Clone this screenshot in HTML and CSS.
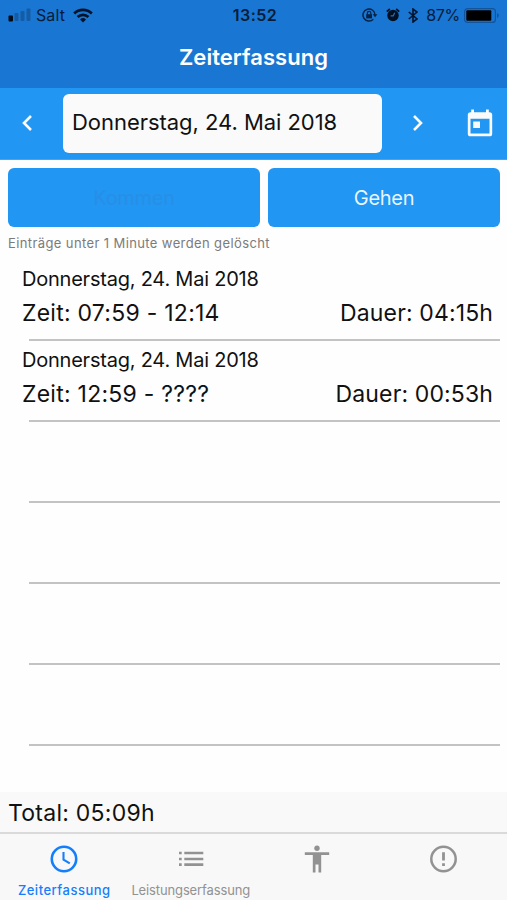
FILE: index.html
```html
<!DOCTYPE html>
<html lang="de">
<head>
    <meta charset="UTF-8">
    <meta name="viewport" content="width=device-width, initial-scale=1.0">
    <title>Zeiterfassung</title>
    <link rel="stylesheet" href="styles.css">
</head>
<body>
    <header>
        <div class="status-bar">
            <div class="status-left">
                <svg class="signal" width="24" height="14" viewBox="0 0 24 14">
                    <rect x="0.5" y="7.500" width="4.500" height="6" rx="1" fill="#020b18"/>
                    <rect x="6.500" y="5" width="4" height="8" rx="1" fill="#165ca5"/>
                    <rect x="12.500" y="3" width="4" height="10" rx="1" fill="#165ca5"/>
                    <rect x="18.500" y="0.500" width="4" height="12.500" rx="1" fill="#165ca5"/>
                </svg>
                <span class="carrier">Salt</span>
                <svg class="wifi" width="20" height="15" viewBox="0 0 20 15" fill="none" stroke="#03142a" stroke-width="2.7">
                    <path d="M1.2 5.5a12.5 12.5 0 0 1 17.6 0"/>
                    <path d="M4.6 9a7.7 7.7 0 0 1 10.8 0"/>
                    <path d="M10 14.5L7 11.4a4.3 4.3 0 0 1 6 0z" fill="#03142a" stroke="none"/>
                </svg>
            </div>
            <div class="clock">13:52</div>
            <div class="status-right">
                <svg class="lock" width="16" height="14" viewBox="0 0 16 14" fill="none" stroke="#062347" stroke-width="1.5">
                    <path d="M11.3 11.2A6 6 0 1 1 13 7"/>
                    <path d="M10.6 6.2h4.8L13.1 9.200z" fill="#062347" stroke="none"/>
                    <rect x="4.2" y="6.2" width="5.8" height="4.2" fill="#062347" stroke="none"/>
                    <path d="M5.4 6.5V5a1.7 1.7 0 0 1 3.4 0v1.5" stroke-width="1.2"/>
                </svg>
                <svg class="alarm" width="14" height="14" viewBox="0 0 14 14">
                    <circle cx="7" cy="7.5" r="5.7" fill="#020f20"/>
                    <path d="M0.8 3.6L3.8 1M13.2 3.6L10.2 1" stroke="#020f20" stroke-width="1.7"/>
                    <path d="M8.7 4.7L7.2 7.9H4.6" fill="none" stroke="#1976d2" stroke-width="1.2"/>
                </svg>
                <svg class="bluetooth" width="10" height="15" viewBox="0 0 10 15" fill="none" stroke="#03162e" stroke-width="1.6">
                    <path d="M0.8 4L9 11 5 14V1l4 3-8.2 7"/>
                </svg>
                <span class="percent">87%</span>
                <svg class="battery" width="36" height="15" viewBox="0 0 36 15">
                    <rect x="0.6" y="0.6" width="30.8" height="13.8" rx="3" fill="none" stroke="#13559b" stroke-width="1.2"/>
                    <rect x="2.3" y="2.3" width="25" height="10.4" rx="1" fill="#000"/>
                    <path d="M33 5v5q1.8-.6 1.8-2.5T33 5z" fill="#13559b"/>
                </svg>
            </div>
        </div>
        <h1>Zeiterfassung</h1>
    </header>

    <div class="toolbar">
        <svg class="prev" width="12" height="18" viewBox="0 0 12 18"><path d="M10 2L3 9l7 7"/></svg>
        <div class="date-field"><span>Donnerstag, 24. Mai 2018</span></div>
        <svg class="next" width="12" height="18" viewBox="0 0 12 18"><path d="M2 2l7 7-7 7"/></svg>
        <svg class="calendar" width="26" height="28" viewBox="0 0 26 28" fill="#fafafa">
            <path fill-rule="evenodd" d="M4.2 0.5H7v2.8h12V0.5h2.8v2.8h.7q2.7 0 2.7 2.6v18.8q0 2.6-2.7 2.6h-19Q.8 27.3.8 24.7V5.9Q.8 3.3 3.500 3.300h.7zM3.500 9.800v14.800h19V9.800z"/>
            <rect x="6.2" y="12.5" width="6.8" height="6.5"/>
        </svg>
    </div>

    <div class="buttons">
        <button class="button come" disabled>Kommen</button>
        <button class="button leave">Gehen</button>
    </div>
    <p class="note">Einträge unter 1 Minute werden gelöscht</p>

    <ul class="entries">
        <li>
            <div class="entry-date">Donnerstag, 24. Mai 2018</div>
            <div class="entry-row"><span class="time">Zeit: 07:59 - 12:14</span><span class="duration">Dauer: 04:15h</span></div>
        </li>
        <li>
            <div class="entry-date">Donnerstag, 24. Mai 2018</div>
            <div class="entry-row"><span class="time">Zeit: 12:59 - ????</span><span class="duration">Dauer: 00:53h</span></div>
        </li>
        <li></li>
        <li></li>
        <li></li>
        <li></li>
    </ul>

    <div class="total"><span>Total: 05:09h</span></div>

    <nav class="tabs">
        <a class="tab active">
            <svg width="28" height="28" viewBox="0 0 28 28" fill="none" stroke="#157efb">
                <circle cx="14" cy="14" r="12.2" stroke-width="2.6"/>
                <path d="M13.5 7v7.6l6.3 3.8" stroke-width="2.1"/>
            </svg>
            <span class="label-time">Zeiterfassung</span>
        </a>
        <a class="tab">
            <svg width="28" height="28" viewBox="0 0 28 28" fill="#929292">
                <path d="M2 6.7h2.7v2.6H2zM2 12.7h2.7v2.6H2zM2 18.3h2.7v2.6H2zM7.3 6.7h19v2.6h-19zM7.3 12.7h19v2.6h-19zM7.3 18.3h19v2.6h-19z"/>
            </svg>
            <span class="label-work">Leistungserfassung</span>
        </a>
        <a class="tab">
            <svg width="28" height="28" viewBox="0 0 28 28" fill="#929292">
                <circle cx="14" cy="3.3" r="2.7"/>
                <path d="M1.8 7.3h24.4v2.6h-8v17.5h-2.7v-8h-3v8H9.8V9.9h-8z"/>
            </svg>
        </a>
        <a class="tab">
            <svg width="28" height="28" viewBox="0 0 28 28" fill="#929292">
                <circle cx="13.5" cy="14" r="12.2" fill="none" stroke="#929292" stroke-width="2.5"/>
                <path d="M12.1 7.3h2.8v8.2h-2.8zM12.1 18.2h2.8v2.7h-2.8z"/>
            </svg>
        </a>
    </nav>
</body>
</html>
```
FILE: styles.css
```css
* {
    margin: 0;
    padding: 0;
    box-sizing: border-box;
    font-family: Inter, Roboto, "Liberation Sans", sans-serif;
}

body {
    width: 507px;
    height: 900px;
    display: flex;
    flex-direction: column;
    background-color: #fefefe;
    color: #111;
    overflow: hidden;
}

header {
    height: 88px;
    background-color: #1976d2;
}

.status-bar {
    display: grid;
    grid-template-columns: 1fr auto 1fr;
    align-items: center;
    height: 30px;
    padding: 0 7px 0 8px;
    color: #051d3a;
    font-size: 16px;
}

.status-left,
.status-right {
    display: flex;
    align-items: center;
}

.status-right {
    justify-content: flex-end;
}

.carrier {
    margin-left: 4px;
    letter-spacing: 0.1px;
}

.wifi {
    margin-left: 8px;
}

.clock {
    padding-left: 2px;
    font-weight: 600;
    letter-spacing: 0.5px;
}

.alarm {
    margin-left: 8px;
}

.bluetooth {
    margin-left: 8px;
}

.percent {
    margin: 0 4px 0 8px;
    letter-spacing: -0.3px;
}

h1 {
    padding-top: 13px;
    font-size: 22px;
    line-height: 29px;
    font-weight: 600;
    letter-spacing: 0.05px;
    text-align: center;
    color: #fff;
}

.toolbar {
    display: flex;
    align-items: center;
    height: 72px;
    padding: 0 14px 1px 21px;
    border-bottom: 1px solid #41a6f5;
    background-color: #2196f3;
}

.prev,
.next {
    fill: none;
    stroke: #fafafa;
    stroke-width: 2.6;
}

.date-field {
    display: flex;
    align-items: center;
    width: 319px;
    height: 59px;
    margin-left: 30px;
    padding: 0 0 2px 9px;
    border-radius: 6px;
    background-color: #fafafa;
    font-size: 22px;
    letter-spacing: -0.04px;
}

.next {
    margin-left: 30px;
}

.calendar {
    margin-left: auto;
}

.buttons {
    display: flex;
    gap: 8px;
    padding: 8px 7px 0 8px;
}

.button {
    height: 59px;
    border: none;
    border-radius: 6px;
    background-color: #2196f3;
    color: #e9f5ff;
    font-size: 20px;
    letter-spacing: -0.3px;
}

.come {
    width: 252px;
    color: #278fe5;
}

.leave {
    flex: 1;
}

.note {
    padding: 8px 8px 0;
    font-size: 13px;
    line-height: 16px;
    letter-spacing: 0.39px;
    color: #7b7b7b;
}

.entries {
    list-style: none;
    padding: 9px 7px 0 22px;
}

.entries li {
    height: 81px;
    padding-top: 7px;
    background: linear-gradient(#c3c3c4, #c3c3c4) 7px 100% / 100% 2px no-repeat;
}

.entry-date {
    font-size: 20px;
    line-height: 24px;
    letter-spacing: -0.22px;
}

.entry-row {
    display: flex;
    justify-content: space-between;
    padding: 7px 7px 0 0;
    font-size: 23px;
    line-height: 30px;
}

.time {
    letter-spacing: 0.25px;
}

.duration {
    letter-spacing: 0.13px;
}

.total {
    height: 42px;
    margin-top: auto;
    padding: 0 8px;
    border-bottom: 2px solid #dadada;
    background-color: #f9f9f9;
    font-size: 23px;
    line-height: 42px;
    letter-spacing: 0.25px;
}

.tabs {
    display: flex;
    height: 66px;
    padding-left: 1px;
    background-color: #f8f8f8;
}

.tab {
    display: flex;
    flex-direction: column;
    align-items: center;
    width: 126.5px;
    padding-top: 11px;
    font-size: 13px;
    line-height: 16px;
    color: #929292;
}

.tab span {
    margin-top: 9px;
}

.active {
    color: #157efb;
    font-weight: 500;
}

.label-time {
    letter-spacing: 0.5px;
}

.label-work {
    letter-spacing: -0.13px;
}
```
